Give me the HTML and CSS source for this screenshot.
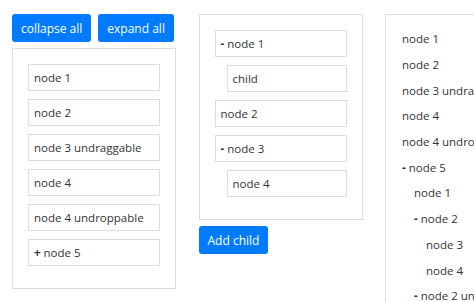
FILE: index.html
```html
<!DOCTYPE html>
<html lang="en">
<head>
    <meta charset="UTF-8">
    <meta name="viewport" content="width=device-width, initial-scale=1.0">
    <title>Tree demo</title>
    <link rel="stylesheet" href="styles.css">
</head>
<body>
    <div class="demo">
        <div class="column">
            <div class="toolbar">
                <button class="btn">collapse all</button>
                <button class="btn">expand all</button>
            </div>
            <ul class="tree">
                <li><div class="node">node 1</div></li>
                <li><div class="node">node 2</div></li>
                <li><div class="node">node 3 undraggable</div></li>
                <li><div class="node">node 4</div></li>
                <li><div class="node">node 4 undroppable</div></li>
                <li><div class="node"><b class="toggle">+</b> node 5</div></li>
            </ul>
        </div>
        <div class="column">
            <ul class="tree">
                <li>
                    <div class="node"><b class="toggle">-</b> node 1</div>
                    <ul class="children">
                        <li><div class="node">child</div></li>
                    </ul>
                </li>
                <li><div class="node">node 2</div></li>
                <li>
                    <div class="node"><b class="toggle">-</b> node 3</div>
                    <ul class="children">
                        <li><div class="node">node 4</div></li>
                    </ul>
                </li>
            </ul>
            <button class="btn add-child">Add child</button>
        </div>
        <div class="column">
            <ul class="tree plain">
                <li><div class="node">node 1</div></li>
                <li><div class="node">node 2</div></li>
                <li><div class="node">node 3 undraggable</div></li>
                <li><div class="node">node 4</div></li>
                <li><div class="node">node 4 undroppable</div></li>
                <li>
                    <div class="node"><b class="toggle">-</b> node 5</div>
                    <ul class="children">
                        <li><div class="node">node 1</div></li>
                        <li>
                            <div class="node"><b class="toggle">-</b> node 2</div>
                            <ul class="children">
                                <li><div class="node">node 3</div></li>
                                <li><div class="node">node 4</div></li>
                            </ul>
                        </li>
                        <li><div class="node"><b class="toggle">-</b> node 2 undraggable</div></li>
                    </ul>
                </li>
            </ul>
        </div>
    </div>
</body>
</html>
```

FILE: styles.css
```css
html, body {
    overflow: hidden;
}
body {
    margin: 0;
    font-family: "Open Sans", "Noto Sans", sans-serif;
    font-size: 11.5px;
    color: #333;
    background-color: #fff;
}
.demo {
    display: flex;
    align-items: flex-start;
    gap: 22.5px;
    padding: 14px 12px;
    width: 600px;
}
.column {
    width: 164px;
    flex-shrink: 0;
}
.toolbar {
    display: flex;
    gap: 7px;
    margin-bottom: 6px;
}
.btn {
    height: 28px;
    padding: 0 9px;
    font-family: inherit;
    font-size: 12px;
    color: #fff;
    background-color: #007bff;
    border: none;
    border-radius: 3px;
}
.add-child {
    margin-top: 6px;
}
.tree {
    list-style: none;
    margin: 0;
    padding: 15px 15px 14px;
    border: 1px solid #ddd;
}
.tree ul {
    list-style: none;
    margin: 0;
    padding: 0;
}
.children {
    padding-left: 12px !important;
}
.node {
    height: 17px;
    line-height: 17px;
    padding: 4px 5px;
    margin-bottom: 8px;
    border: 1px solid #ddd;
    white-space: nowrap;
}
.toggle {
    font-weight: bold;
}
.plain {
    padding: 11px 16px;
    width: 300px;
    height: 400px;
}
.plain .node {
    border: none;
    padding: 4.35px 0;
    margin-bottom: 0;
}
```
